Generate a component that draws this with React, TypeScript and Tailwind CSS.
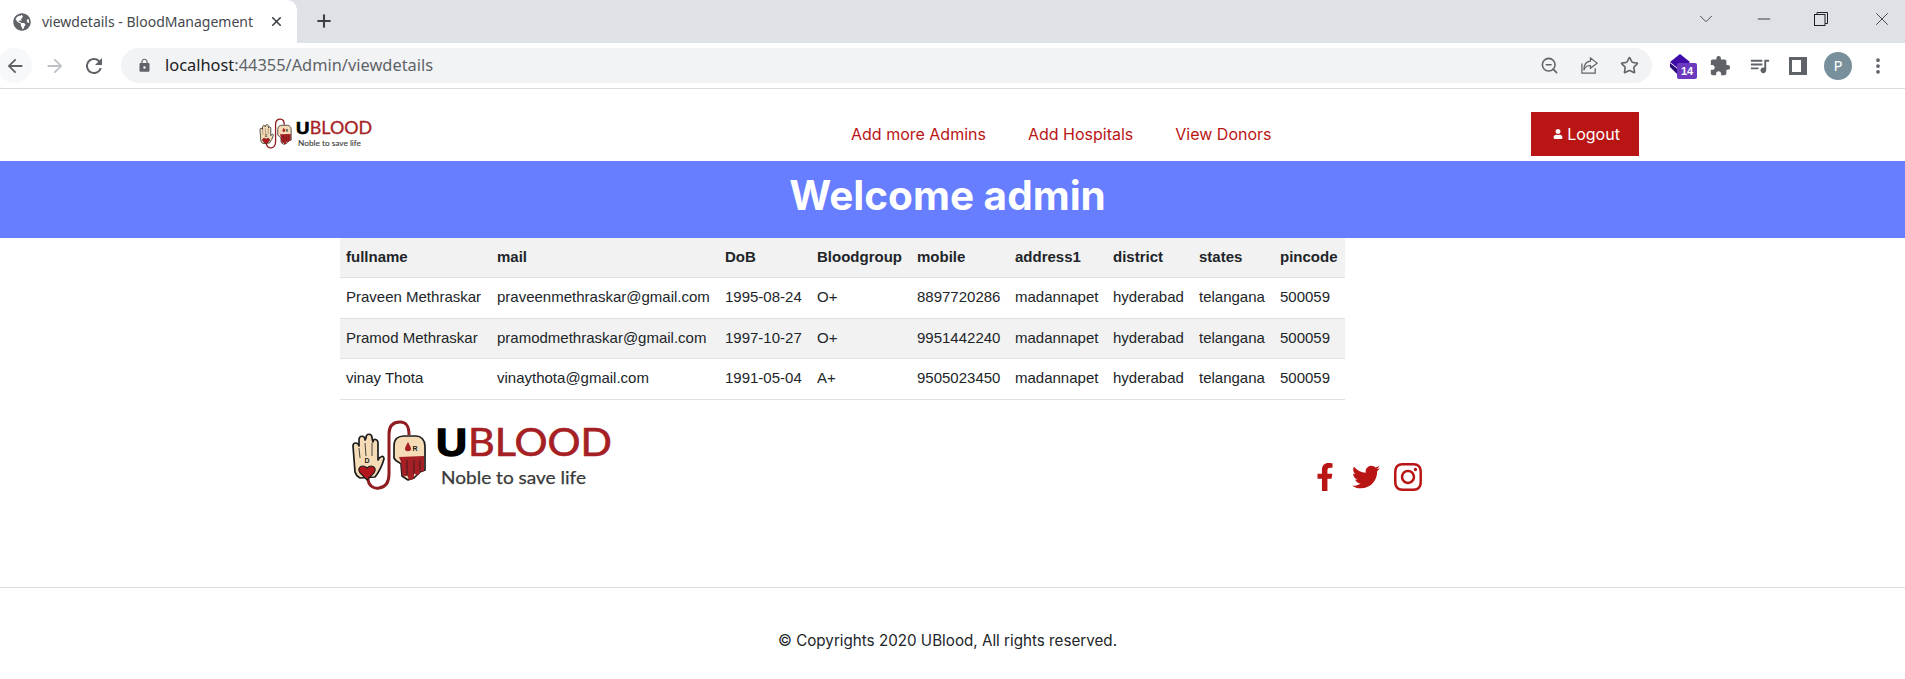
import { FaFacebookF, FaGlobeAmericas, FaInstagram, FaTwitter, FaUser } from 'react-icons/fa';
import { MdArrowBack, MdArrowForward, MdExtension, MdLock, MdQueueMusic, MdRefresh } from 'react-icons/md';
import { ChevronDown, EllipsisVertical, Minus, Plus, Star, X, ZoomOut } from 'lucide-react';

type Row = {
  fullname: string;
  mail: string;
  dob: string;
  group: string;
  mobile: string;
  address: string;
  district: string;
  states: string;
  pincode: string;
};

const columns = ['fullname', 'mail', 'DoB', 'Bloodgroup', 'mobile', 'address1', 'district', 'states', 'pincode'];

const rows: Row[] = [
  { fullname: 'Praveen Methraskar', mail: 'praveenmethraskar@gmail.com', dob: '1995-08-24', group: 'O+', mobile: '8897720286', address: 'madannapet', district: 'hyderabad', states: 'telangana', pincode: '500059' },
  { fullname: 'Pramod Methraskar', mail: 'pramodmethraskar@gmail.com', dob: '1997-10-27', group: 'O+', mobile: '9951442240', address: 'madannapet', district: 'hyderabad', states: 'telangana', pincode: '500059' },
  { fullname: 'vinay Thota', mail: 'vinaythota@gmail.com', dob: '1991-05-04', group: 'A+', mobile: '9505023450', address: 'madannapet', district: 'hyderabad', states: 'telangana', pincode: '500059' },
];

function Logo({ className }: { className: string }) {
  return (
    <svg viewBox="0 0 300 100" className={className}>
      {/* tube */}
      <path d="M38 68 C38 76 44 79 49 78 C56 77 59 72 59 64 L59 24 C59 15 64 12 70 12 C76 12 79 15 79 25" fill="none" stroke="#8f1d21" strokeWidth="3" />
      {/* donor hand */}
      <path d="M25 62 L23 36 C23 32 28 32 29 36 L29 30 C29 25 35 25 35 30 L36 28 C36 23 42 23 42 28 L43 32 C43 28 48 29 48 33 L48 50 C50 46 54 45 54 49 C52 56 49 62 45 67 L30 68 C28 67 26 65 25 62 Z" fill="#f6dcb6" stroke="#1c1c1c" strokeWidth="1.7" strokeLinejoin="round" />
      <path d="M29 38 L30 48 M35 33 L36 46 M42 33 L42 46" fill="none" stroke="#1c1c1c" strokeWidth="0.8" />
      <path d="M37 70 L30 63 C26 57 33 54 37 58 C41 54 48 57 44 63 Z" fill="#b3161c" stroke="#1c1c1c" strokeWidth="1.1" />
      <text x="37" y="53" textAnchor="middle" fontSize="7" fontWeight="700" fill="#1c1c1c" fontFamily="'Liberation Sans', sans-serif">D</text>
      {/* recipient hand */}
      <path d="M64 48 L64 36 C64 29 68 26 74 26 L86 26 C91 26 95 30 95 36 L95 60 L90 62 L84 68 L78 70 L72 66 L71 54 C69 52 66 52 64 48 Z" fill="#f6dcb6" stroke="#1c1c1c" strokeWidth="1.7" strokeLinejoin="round" />
      <path d="M69 47 L94 46 L94 60 C94 62 91 62 90 60 L90 63 C89 66 85 65 84 63 L84 67 C83 71 78 71 78 67 L77 65 C76 67 72 67 72 63 L71 52 Z" fill="#a51f24" />
      <path d="M77 50 L77 66 M84 50 L84 64 M90 50 L90 61" fill="none" stroke="#1c1c1c" strokeWidth="0.7" />
      <path d="M78 32 C76 36 75 37 75 39 C75 42 81 42 81 39 C81 37 80 36 78 32 Z" fill="#a51f24" />
      <text x="85" y="41" textAnchor="middle" fontSize="7" fontWeight="700" fill="#1c1c1c" fontFamily="'Liberation Sans', sans-serif">R</text>
      {/* wordmark */}
      <text x="106" y="46" fontSize="38" fontWeight="700" fill="#000" stroke="#000" strokeWidth="1.4" textLength="31" lengthAdjust="spacingAndGlyphs" fontFamily="'Liberation Sans', sans-serif">U</text>
      <text x="138" y="46" fontSize="39" fill="#a51f24" stroke="#a51f24" strokeWidth="0.7" textLength="144" lengthAdjust="spacingAndGlyphs" fontFamily="Lato, sans-serif">BLOOD</text>
      <text x="111" y="74" fontSize="18" fill="#3a3a3a" stroke="#3a3a3a" strokeWidth="0.25" textLength="145" lengthAdjust="spacingAndGlyphs" fontFamily="Lato, sans-serif">Noble to save life</text>
    </svg>
  );
}

function BrowserChrome() {
  return (
    <div className="font-['Noto_Sans',sans-serif]">
      <div className="flex h-[43px] items-start bg-[#dee1e6]">
        <div className="flex h-[43px] w-[297px] items-center rounded-tr-[10px] bg-white pl-[13px] text-[#45494e]">
          <FaGlobeAmericas className="size-[18px] text-[#5f6368]" />
          <span className="ml-[11px] w-[227px] text-[14px] whitespace-nowrap">viewdetails - BloodManagement</span>
          <X className="size-[15px] text-[#3c4043]" strokeWidth={2.5} />
        </div>
        <Plus className="mt-[11px] ml-[17px] size-[20px] text-[#3c4043]" strokeWidth={2.5} />
        <div className="ml-auto flex items-center pt-[8px] text-[#3c4043]">
          <ChevronDown className="size-[22px]" strokeWidth={1} />
          <Minus className="ml-[37px] size-[20px]" strokeWidth={1.2} />
          <svg viewBox="0 0 14 14" className="ml-[40px] size-[14px]" fill="none" stroke="#202124" strokeWidth="1">
            <rect x="0.5" y="2.5" width="10.5" height="11" />
            <path d="M3 2.5 V0.5 H13.5 V11.5 H11" />
          </svg>
          <X className="mr-[12px] ml-[43px] size-[22px]" strokeWidth={1} />
        </div>
      </div>
      <div className="flex h-[46px] items-center border-b border-[#dadce0] bg-white text-[#5f6368]">
        <div className="-ml-[3px] flex size-[35px] items-center justify-center rounded-full bg-[#f7f8f9]">
          <MdArrowBack className="size-[22px]" />
        </div>
        <MdArrowForward className="ml-[12px] size-[22px] text-[#bdc1c6]" />
        <MdRefresh className="ml-[16px] size-[24px]" />
        <div className="ml-[15px] flex h-[35px] w-[1531px] items-center rounded-full bg-[#f1f3f4] pl-[16px]">
          <MdLock className="size-[15px]" />
          <span className="ml-[13px] text-[16.4px] whitespace-nowrap text-[#5f6368]"><span className="text-[#202124]">localhost</span>:44355/Admin/viewdetails</span>
          <ZoomOut className="ml-auto size-[19px]" />
          <svg viewBox="0 0 20 20" className="ml-[21px] size-[19px]" fill="none" stroke="#5f6368" strokeWidth="1.3">
            <path d="M2 8 V18 H16 V13" />
            <path d="M11 2 L18 7.5 L11 13 V10 C7 10 5 12 4 15 C4 10 6 6 11 5.5 Z" />
          </svg>
          <Star className="mr-[13px] ml-[21px] size-[19px]" strokeWidth={2} />
        </div>
        <div className="relative ml-[17px] size-[27px]">
          <svg viewBox="0 0 22 20" className="absolute top-[2px] left-0 h-[20px] w-[22px]" fill="#3f0ca8">
            <path d="M11 0 L21 8 L11 16 L1 8 Z" />
            <path d="M1 9 L11 17 L14 20 H8 L1 13 Z" fill="#2a0a7a" />
          </svg>
          <span className="absolute top-[11px] left-[8px] h-[16px] w-[20px] rounded-[2px] bg-[#6b3abf] text-center font-['Liberation_Sans',sans-serif] text-[11px] leading-[16px] font-bold text-white">14</span>
        </div>
        <MdExtension className="ml-[13px] size-[22px]" />
        <MdQueueMusic className="ml-[17px] size-[23px]" />
        <div className="ml-[18px] flex h-[18px] w-[18px] items-center justify-end bg-[#5f6368]">
          <div className="mr-[6px] h-[12px] w-[9px] bg-white" />
        </div>
        <div className="ml-[17px] flex size-[28px] items-center justify-center rounded-full bg-[#78909c] text-[15px] text-white">P</div>
        <EllipsisVertical className="ml-[16px] size-[20px]" strokeWidth={2.5} />
      </div>
    </div>
  );
}

export default function App() {
  return (
    <div className="h-[679px] overflow-hidden bg-white">
      <BrowserChrome />

      {/* Header */}
      <header className="flex h-[72px] items-start pl-[250px] font-['Inter',sans-serif]">
        <Logo className="mt-[25px] w-[130px]" />
        <nav className="mt-[34px] ml-[471px] flex gap-[42px] text-[16px] leading-[22px] text-[#b91515]">
          <a>Add more Admins</a>
          <a>Add Hospitals</a>
          <a>View Donors</a>
        </nav>
        <a className="mt-[23px] ml-[259px] flex h-[44px] w-[108px] items-center justify-center gap-[4px] bg-[#b91515] pl-[4px] text-[16px] text-white">
          <FaUser className="size-[10px]" />
          Logout
        </a>
      </header>

      {/* Banner */}
      <section className="h-[77px] bg-[#667eff] pt-[5px] pr-[10px] text-center font-['Inter',sans-serif] text-[40.5px] leading-[60px] font-bold text-white">
        <h1>Welcome admin</h1>
      </section>

      {/* Donors */}
      <section className="pl-[340px] font-['Liberation_Sans',sans-serif] text-[15px] text-[#212529]">
        <table className="w-[1005px] table-fixed border-collapse">
          <colgroup>
            <col className="w-[151px]" />
            <col className="w-[228px]" />
            <col className="w-[92px]" />
            <col className="w-[100px]" />
            <col className="w-[98px]" />
            <col className="w-[98px]" />
            <col className="w-[86px]" />
            <col className="w-[81px]" />
            <col className="w-[71px]" />
          </colgroup>
          <thead>
            <tr className="h-[39px] border-b border-[#dee2e6] bg-[#f2f2f2] text-left">
              {columns.map((column) => (
                <th key={column} className="px-[6px] font-bold whitespace-nowrap">{column}</th>
              ))}
            </tr>
          </thead>
          <tbody>
            {rows.map((row, index) => (
              <tr key={row.mail} className={`border-b border-[#dee2e6] ${index === 1 ? 'h-[40px] bg-[#f2f2f2]' : 'h-[41px] bg-white'}`}>
                <td className="px-[6px] whitespace-nowrap">{row.fullname}</td>
                <td className="px-[6px] whitespace-nowrap">{row.mail}</td>
                <td className="px-[6px] whitespace-nowrap">{row.dob}</td>
                <td className="px-[6px] whitespace-nowrap">{row.group}</td>
                <td className="px-[6px] whitespace-nowrap">{row.mobile}</td>
                <td className="px-[6px] whitespace-nowrap">{row.address}</td>
                <td className="px-[6px] whitespace-nowrap">{row.district}</td>
                <td className="px-[6px] whitespace-nowrap">{row.states}</td>
                <td className="px-[6px] whitespace-nowrap">{row.pincode}</td>
              </tr>
            ))}
          </tbody>
        </table>
      </section>

      {/* Footer */}
      <footer className="font-['Inter',sans-serif]">
        <div className="flex h-[187px] items-start pl-[330px]">
          <Logo className="mt-[10px] w-[300px]" />
          <div className="mt-[61px] ml-[681px] flex items-center text-[#b91515]">
            <FaFacebookF className="size-[28px]" />
            <FaTwitter className="ml-[13px] size-[28px]" />
            <FaInstagram className="ml-[12px] size-[32px]" />
          </div>
        </div>
        <div className="border-t border-[#dddddd] pt-[43px] pr-[10px] text-center text-[15.2px] leading-[20px] text-[#212529]">
          © Copyrights 2020 UBlood, All rights reserved.
        </div>
      </footer>
    </div>
  );
}
